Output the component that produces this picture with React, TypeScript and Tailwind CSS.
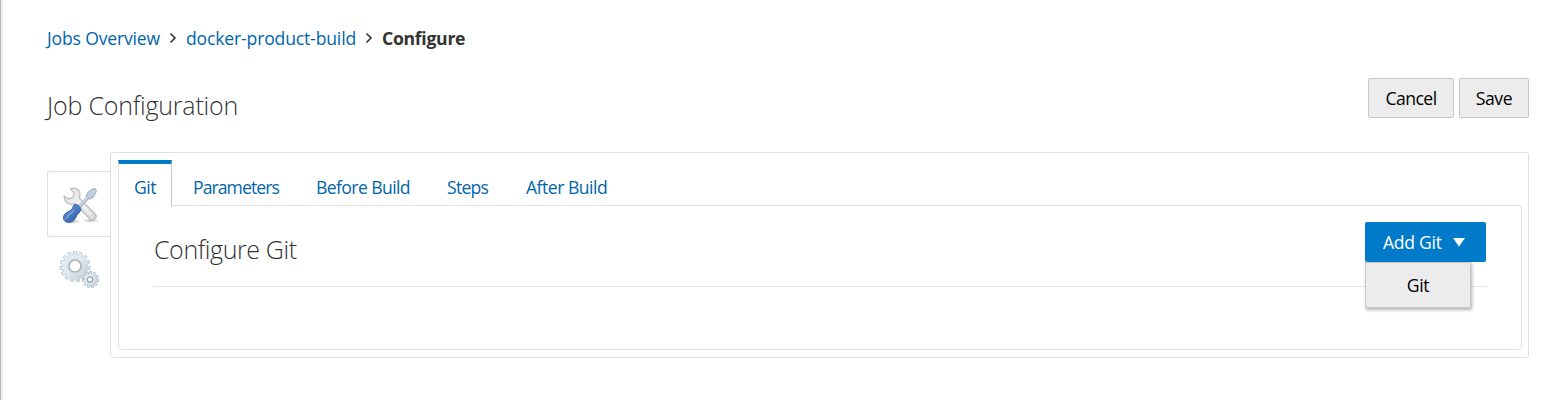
import React from 'react';

function gearPath(cx: number, cy: number, outer: number, inner: number, teeth: number) {
  const pts: string[] = [];
  const step = (Math.PI * 2) / teeth;
  for (let i = 0; i < teeth; i++) {
    const a = i * step - Math.PI / 2;
    const corners: [number, number][] = [
      [-0.32, inner],
      [-0.24, outer],
      [0.24, outer],
      [0.32, inner],
    ];
    corners.forEach(([t, r]) => {
      pts.push(`${(cx + r * Math.cos(a + t * step)).toFixed(2)},${(cy + r * Math.sin(a + t * step)).toFixed(2)}`);
    });
  }
  return `M${pts.join('L')}Z`;
}

function ToolsIcon() {
  return (
    <svg width="40" height="40" viewBox="0 0 40 40" fill="none">
      <defs>
        <linearGradient id="steel" x1="0" y1="0" x2="1" y2="1">
          <stop offset="0" stopColor="#e2e2e2" />
          <stop offset="0.5" stopColor="#efefef" />
          <stop offset="1" stopColor="#d6d6d6" />
        </linearGradient>
        <linearGradient id="handle" x1="0" y1="0" x2="1" y2="1">
          <stop offset="0" stopColor="#3a66ac" />
          <stop offset="0.45" stopColor="#4f80c6" />
          <stop offset="1" stopColor="#2a5297" />
        </linearGradient>
        <radialGradient id="shade">
          <stop offset="0" stopColor="#777" stopOpacity="0.5" />
          <stop offset="1" stopColor="#777" stopOpacity="0" />
        </radialGradient>
      </defs>
      <ellipse cx="10" cy="34.500" rx="9" ry="2.400" fill="url(#shade)" />
      <ellipse cx="29" cy="33.500" rx="9" ry="2.400" fill="url(#shade)" />
      <path
        d="M8.500 2C13-.2 18 2.500 18 7.500l-.6 3.600L33.500 27.500c2.300 2.700-2.400 7.400-5.300 4.900L13 16.700C7.500 18.600 2 15.500 2 9l4.300 2.800 4.900-1.300.8-4.700z"
        fill="url(#steel)"
        stroke="#b9b9b9"
        strokeWidth="1.200"
        strokeLinejoin="round"
      />
      <path d="M16.500 14l12.500 13.500" stroke="#f4f4f4" strokeWidth="1.600" />
      <circle cx="30" cy="30" r="1.400" fill="#fff" stroke="#b8b8b8" strokeWidth="0.700" />
      <path d="M16 21L27 9.500" stroke="#a9b4c4" strokeWidth="3.600" />
      <path d="M16 20.500L27 9" stroke="#d5dde8" strokeWidth="1.500" />
      <path
        d="M24.500 8.500l1.700-3.800 5-2.900c2-.6 3.400 1 2.900 2.900l-2.700 5.400-4 2.100z"
        fill="#c3cfe0"
        stroke="#abb9cc"
        strokeWidth="1.200"
        strokeLinejoin="round"
      />
      <path
        d="M12.500 17.500c2-1.200 7.400 3.200 6.300 5.700-1.300 2.900-3.400 3.600-4.300 5.900-1.200 3.400-3.600 6-7.200 6.300-4.900.3-7.500-3.700-5.100-7.400 2-3.400 6.800-3.900 7.900-6.100.8-1.700 1.200-3.600 2.400-4.400z"
        fill="url(#handle)"
        stroke="#3762a5"
        strokeWidth="0.900"
      />
      <path d="M11.500 23.500c-2 3.500-5.500 4-6.800 7" stroke="#82a8de" strokeWidth="1.400" strokeLinecap="round" />
    </svg>
  );
}

function GearsIcon() {
  return (
    <svg width="42" height="40" viewBox="0 0 42 40" fill="none">
      <defs>
        <linearGradient id="gear" x1="0" y1="0" x2="1" y2="1">
          <stop offset="0" stopColor="#e8f1f8" />
          <stop offset="0.5" stopColor="#dfe8ef" />
          <stop offset="1" stopColor="#b7c8d6" />
        </linearGradient>
      </defs>
      <path d={gearPath(16, 15.5, 15.2, 12.4, 15)} fill="url(#gear)" stroke="#bccad5" strokeWidth="0.900" strokeLinejoin="round" />
      <circle cx="16" cy="15" r="7" fill="#fff" stroke="#c3ced6" strokeWidth="1" />
      <circle cx="16" cy="15" r="5.900" fill="#fff" stroke="#aab3ba" strokeWidth="1.400" />
      <path d={gearPath(31.500, 28.5, 8.2, 6, 11)} fill="url(#gear)" stroke="#aebfcc" strokeWidth="0.900" strokeLinejoin="round" />
      <circle cx="31" cy="28.500" r="2.700" fill="#fff" stroke="#98a9b6" strokeWidth="1.300" />
    </svg>
  );
}

function Chevron() {
  return (
    <svg className="shrink-0" width="8" height="12" viewBox="0 0 8 12" fill="none">
      <path d="M1.500 1.500L6 6L1.500 10.500" stroke="#333" strokeWidth="1.600" />
    </svg>
  );
}

export default function App() {
  return (
    <div className="flex h-[400px] w-[1546px] overflow-hidden bg-white font-['Open_Sans','Noto_Sans',sans-serif] text-[17.6px] leading-6 whitespace-nowrap text-black">
      <div className="w-[3px] shrink-0 border-l border-[#b8b8b8] bg-[#ededed]" />
      <div className="flex w-[1526px] flex-col pl-11">
        <nav className="mt-[26px] flex h-6 items-center text-[#0065ab]">
          <a className="w-[122px] tracking-[-0.18px]">Jobs Overview</a>
          <Chevron />
          <a className="ml-[9px] w-[179px] tracking-[-0.17px]">docker-product-build</a>
          <Chevron />
          <span className="ml-[9px] font-bold tracking-[-0.28px] text-[#333]">Configure</span>
        </nav>

        <header className="mt-7 flex h-10 justify-between">
          <h1 className="mt-[11px] text-[25px] leading-8 font-[350] tracking-[-0.2px] text-[#333]">Job Configuration</h1>
          <div className="flex gap-[5px]">
            <button className="h-10 w-[86px] rounded-[2px] border border-[#c8c8c8] bg-[#ececec] tracking-[-0.55px]">Cancel</button>
            <button className="h-10 w-[70px] rounded-[2px] border border-[#c8c8c8] bg-[#ececec] tracking-[-0.45px]">Save</button>
          </div>
        </header>

        <main className="mt-[34px] flex h-[206px]">
          <aside className="w-[63px] shrink-0 pt-[19px]">
            <div className="h-[66px] rounded-l-[3px] border border-r-0 border-[#dfdfdf] pt-[15px] pl-[14px]">
              <ToolsIcon />
            </div>
            <div className="pt-[14px] pl-[12px]">
              <GearsIcon />
            </div>
          </aside>

          <section className="flex grow flex-col rounded-[3px] border border-[#dfdfdf] pt-[7px] pr-[6px] pl-[7px]">
            <div className="z-10 -mb-[1px] flex h-[46px] shrink-0 text-[#0065ab]">
              <a className="h-[47px] w-[54px] shrink-0 border-x border-t-4 border-x-[#dfdfdf] border-r-[#c8c8c8] border-t-[#007ac9] bg-white pt-[11px] pl-[15px] tracking-[-0.5px]">Git</a>
              <a className="mt-[15px] ml-[21px] w-[123px] tracking-[-0.93px]">Parameters</a>
              <a className="mt-[15px] w-[131px] tracking-[-0.6px]">Before Build</a>
              <a className="mt-[15px] w-[79px] tracking-[-0.75px]">Steps</a>
              <a className="mt-[15px] tracking-[-0.5px]">After Build</a>
            </div>
            <div className="h-[145px] w-[1404px] rounded-[3px] rounded-tl-none border border-[#dfdfdf] px-[35px] pt-4">
              <div className="relative flex h-[65px] justify-between border-b border-[#e4e4e4]">
                <h2 className="mt-[11px] text-[25px] leading-8 font-[350] tracking-[-0.4px] text-[#333]">Configure Git</h2>
                <button className="flex h-10 w-[121px] items-center rounded-[2px] bg-[#007ac9] pl-[18px] tracking-[-0.3px] text-white">
                  <span className="w-[70px] text-left">Add Git</span>
                  <svg className="mt-px" width="12" height="9" viewBox="0 0 12 9">
                    <path d="M0 0H12L6 8.500Z" fill="#fff" />
                  </svg>
                </button>
                <div className="absolute top-10 right-[15px] flex h-[46px] w-[106px] items-center justify-center border border-[#c8c8c8] bg-[#ececec] tracking-[-0.4px] shadow-[1px_2px_3px_rgba(0,0,0,0.3)]">
                  Git
                </div>
              </div>
            </div>
          </section>
        </main>
      </div>
    </div>
  );
}
